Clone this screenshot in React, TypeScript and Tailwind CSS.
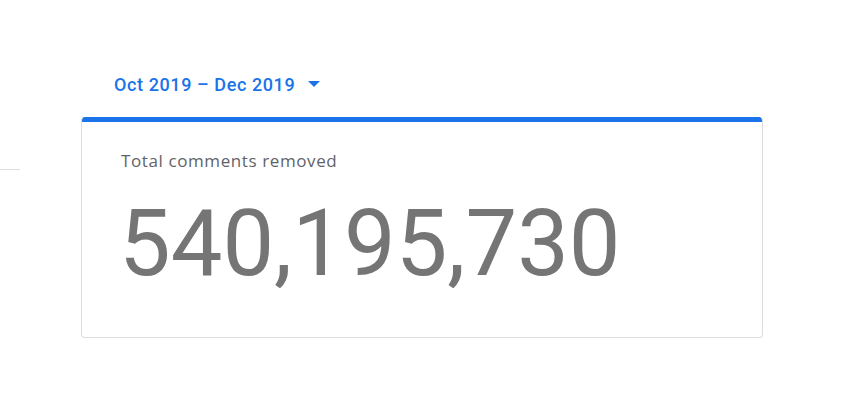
export default function App() {
  return (
    <div className="relative w-[859px] h-[400px] bg-white" style={{ fontFamily: "Roboto, 'Open Sans', sans-serif" }}>
      {/* stray divider on the left */}
      <div className="absolute left-0 top-[169px] w-[20px] h-px bg-[#dadce0]" />

      <div className="pl-[81px] pt-[70px] w-[763px]">
        <button className="flex items-center gap-[13px] pl-[33px] h-[28px] text-[#1a73e8] text-[18px] font-medium tracking-[0.6px]">
          <span>Oct 2019 – Dec 2019</span>
          <svg width="12" height="6" viewBox="0 0 12 6">
            <path d="M0 0h12L6 6z" fill="#1a73e8" />
          </svg>
        </button>

        <div className="mt-[19px] h-[221px] rounded-[4px] border border-[#dadce0] border-t-0 overflow-hidden">
          <div className="h-[5px] bg-[#1a73e8]" />
          <div className="pl-[39px] pt-[27px]">
            <div className="text-[17px] text-[#5f6368] leading-[24px] tracking-[0.6px] font-['Open_Sans',sans-serif]">Total comments removed</div>
            <div className="mt-[21px] -ml-[2px] text-[92px] leading-[100px] text-[#757575]">540,195,730</div>
          </div>
        </div>
      </div>
    </div>
  );
}
